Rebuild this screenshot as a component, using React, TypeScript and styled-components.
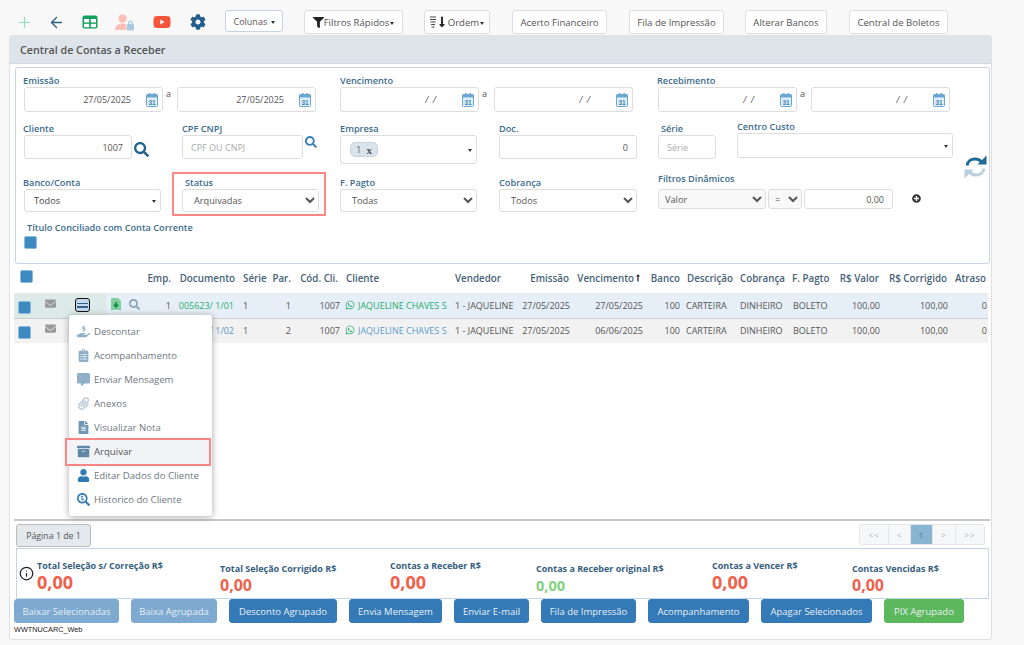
import React from 'react';
import styled, { createGlobalStyle } from 'styled-components';
import { Plus, ArrowLeft, Info } from 'lucide-react';
import {
  FaYoutube, FaCog, FaSearch, FaPlusCircle, FaWhatsapp, FaFilter, FaHandHoldingUsd,
  FaClipboardList, FaCommentAlt, FaPaperclip, FaFileAlt, FaArchive, FaUser, FaSearchDollar,
  FaEnvelope, FaLongArrowAltUp, FaLongArrowAltDown,
} from 'react-icons/fa';

const GlobalStyle = createGlobalStyle`
  * { box-sizing: border-box; }
  html, body { margin: 0; padding: 0; background: #f8f8f8; }
  body { font-family: "Open Sans", "Noto Sans", sans-serif; font-size: 9px; color: #555; }
`;

const Page = styled.div`
  width: 1024px;
  height: 645px;
  padding: 9px 32px 0 9px;
  overflow: hidden;
`;

const Toolbar = styled.div`
  display: flex;
  align-items: flex-start;
  height: 26px;
`;

const ToolIcon = styled.span<{ $w: number }>`
  width: ${(p) => p.$w}px;
  height: 26px;
  display: flex;
  align-items: center;
  justify-content: center;
  flex: none;
`;

const ToolButton = styled.button<{ $w: number; $mr: number; $ml?: number; $blue?: boolean }>`
  width: ${(p) => p.$w}px;
  height: ${(p) => (p.$blue ? 22 : 24)}px;
  margin: 1px ${(p) => p.$mr}px 0 ${(p) => p.$ml ?? 0}px;
  flex: none;
  display: flex;
  align-items: center;
  justify-content: center;
  padding: 0;
  background: #fff;
  border: 1px solid ${(p) => (p.$blue ? '#c6d3e3' : '#ddd')};
  border-radius: 3px;
  font: 400 ${(p) => (p.$blue ? 9 : 9.6)}px "Open Sans", sans-serif;
  color: #555;
  white-space: nowrap;
`;

const Caret = styled.span`
  display: inline-block;
  width: 0;
  height: 0;
  margin-left: 1px;
  margin-top: 2px;
  border-left: 2.5px solid transparent;
  border-right: 2.5px solid transparent;
  border-top: 3px solid #333;
`;

const Panel = styled.div`
  width: 983px;
  height: 605px;
  background: #fff;
  border: 1px solid #e0e0e0;
  border-radius: 3px;
  overflow: hidden;
`;

const PanelHead = styled.div`
  height: 28px;
  padding-left: 10px;
  display: flex;
  align-items: center;
  background: #dde4ea;
  border-bottom: 1px solid #cfd9e2;
  font-size: 10.7px;
  font-weight: 600;
  color: #555;
`;

const FilterBox = styled.div`
  margin: 3px 1px 0 5px;
  height: 197px;
  display: grid;
  grid-template-columns: 1fr 25px;
  padding: 6px 0 0 8px;
  border: 1px solid #c7d5e6;
  border-radius: 3px;
`;

const FormArea = styled.div`
  display: flex;
  flex-direction: column;
`;

const RefreshColumn = styled.div`
  padding-top: 81px;
`;

const FormRow = styled.div<{ $mt?: number }>`
  display: flex;
  align-items: flex-start;
  margin-top: ${(p) => p.$mt ?? 0}px;
`;

const Field = styled.div<{ $w: number; $mr?: number; $top?: number }>`
  width: ${(p) => p.$w}px;
  margin-right: ${(p) => p.$mr ?? 0}px;
  padding-top: ${(p) => p.$top ?? 0}px;
  flex: none;
`;

const HighlightField = styled(Field)`
  padding: 2px 5px 2px 8px;
  border: 2px solid #ff8585;
  border-radius: 1px;
`;

const Label = styled.div<{ $indent?: number }>`
  height: 13px;
  line-height: 13px;
  margin-left: ${(p) => p.$indent ?? 0}px;
  font-size: 9.2px;
  font-weight: 600;
  color: #3b6c8f;
  white-space: nowrap;
`;

const DatePair = styled.div`
  display: flex;
`;

const Joiner = styled.span<{ $w: number }>`
  width: ${(p) => p.$w}px;
  padding-left: 3px;
  font-size: 9px;
  line-height: 13px;
  color: #555;
`;

const DateBox = styled.div`
  width: 139px;
  height: 25px;
  display: flex;
  align-items: center;
  justify-content: flex-end;
  padding-right: 4px;
  border: 1px solid #ddd;
  border-radius: 3px;
  font-size: 9px;
  color: #555;
`;

const DateText = styled.span`
  margin-right: 15px;
`;

const EmptyDate = styled.span`
  margin-right: 26px;
  word-spacing: 2px;
  font-style: italic;
`;

const TextBox = styled.input<{ $w?: number; $h?: number }>`
  display: block;
  width: ${(p) => (p.$w ? `${p.$w}px` : '100%')};
  height: ${(p) => p.$h ?? 24}px;
  padding: 0 8px;
  border: 1px solid #ddd;
  border-radius: 3px;
  outline: none;
  background: #fff;
  font: 400 9px "Open Sans", sans-serif;
  color: #555;
  text-align: right;
  &::placeholder { color: #aaa; }
  &.left { text-align: left; }
`;

const InputLine = styled.div<{ $mt?: number }>`
  display: flex;
  align-items: flex-start;
  gap: 2px;
  margin-top: ${(p) => p.$mt ?? 0}px;
`;

const SearchSlot = styled.span<{ $mt: number }>`
  display: block;
  margin-top: ${(p) => p.$mt}px;
  line-height: 0;
`;

const AddSlot = styled.span`
  display: block;
  margin: 5px 0 0 17px;
  line-height: 0;
`;

const FakeSelect = styled.div<{ $h?: number }>`
  height: ${(p) => p.$h ?? 23}px;
  display: flex;
  align-items: center;
  justify-content: space-between;
  padding: 0 4px 0 9px;
  background: #fff;
  border: 1px solid #ddd;
  border-radius: 3px;
  font-size: 9.2px;
  color: #444;
`;

const NativeSelect = styled.select<{ $w?: number; $h?: number; $gray?: boolean }>`
  display: block;
  width: ${(p) => (p.$w ? `${p.$w}px` : '100%')};
  height: ${(p) => p.$h ?? 23}px;
  padding: 0 0 0 ${(p) => (p.$gray ? 2 : 7)}px;
  background-color: ${(p) => (p.$gray ? '#f8f8f8' : '#fff')};
  border: 1px solid #ddd;
  border-radius: 3px;
  outline: none;
  font: 400 9.2px "Open Sans", sans-serif;
  color: #555;
`;

const Tag = styled.span`
  display: inline-flex;
  align-items: center;
  gap: 5px;
  height: 15px;
  padding: 0 5px;
  background: #d9e3ec;
  border: 1px solid #c5d3df;
  border-radius: 5px;
  font-size: 9.5px;
  color: #666;
`;

const TagClose = styled.b`
  font-family: "Liberation Serif", serif;
  font-size: 11px;
  color: #555;
`;

const CheckSquare = styled.span<{ $mt?: number }>`
  display: block;
  width: 13px;
  height: 13px;
  margin-top: ${(p) => p.$mt ?? 0}px;
  background: #3d8ac0;
  border: 1px solid #8fbbdb;
  border-radius: 2px;
`;

const TableZone = styled.div`
  position: relative;
  height: 256px;
  margin: 1px 0 0 4px;
  width: 976px;
  border-bottom: 2px solid #c8c8c8;
`;

const Grid = styled.table`
  width: 974px;
  table-layout: fixed;
  border-collapse: collapse;
`;

const HeadCell = styled.th<{ $align?: string; $pl: number; $pr: number }>`
  height: 28px;
  padding: 0 ${(p) => p.$pr}px 0 ${(p) => p.$pl}px;
  text-align: ${(p) => p.$align ?? 'left'};
  vertical-align: middle;
  font-size: 9.8px;
  font-weight: 600;
  color: #466278;
  white-space: nowrap;
  border-bottom: 1px solid #e8e8e8;
`;

const BodyRow = styled.tr<{ $bg: string }>`
  background: ${(p) => p.$bg};
  border-bottom: 1px solid #cdcdcd;
  &:last-child { border-bottom: 0; }
`;

const BodyCell = styled.td<{ $align?: string; $pl: number; $pr: number; $tint?: boolean }>`
  height: 25px;
  padding: 0 ${(p) => p.$pr}px 0 ${(p) => p.$pl}px;
  text-align: ${(p) => p.$align ?? 'left'};
  font-size: 9px;
  color: #555;
  white-space: nowrap;
  overflow: hidden;
  background: ${(p) => (p.$tint ? '#dcebe8' : 'transparent')};
`;

const Tinted = styled.span<{ $color: string }>`
  color: ${(p) => p.$color};
`;

const RowCheck = styled(CheckSquare)`
  margin-top: 3px;
`;

const MailSlot = styled.span`
  display: block;
  line-height: 0;
  margin-top: -5px;
`;

const CellIcons = styled.span`
  display: flex;
  align-items: center;
  gap: 8px;
  margin-top: -3px;
`;

const MenuButton = styled.span`
  display: flex;
  flex-direction: column;
  justify-content: center;
  gap: 2px;
  width: 15px;
  height: 14px;
  margin: -1px 0 0 0;
  padding: 0 1px;
  background: #c3d8ea;
  border: 1.5px solid #111;
  border-radius: 3px;
`;

const MenuLine = styled.i`
  display: block;
  height: 1.5px;
  background: #2c5f8a;
`;

const RowMenu = styled.div`
  position: absolute;
  left: 55px;
  top: 50px;
  width: 143px;
  height: 201px;
  padding-top: 4px;
  background: #fff;
  border-radius: 3px;
  box-shadow: 0 1px 7px rgba(0, 0, 0, 0.35);
`;

const MenuItem = styled.div<{ $active?: boolean }>`
  display: flex;
  align-items: center;
  gap: 2px;
  height: 24.15px;
  padding-left: 6px;
  font-size: 9.6px;
  color: #6d7780;
  white-space: nowrap;
  ${(p) =>
    p.$active &&
    `margin: -2px 1px -2px -4px; height: 28px; padding-left: 8px; position: relative; background: #f2f3f6; border: 2px solid #ff8585; color: #555;`}
`;

const MenuGlyph = styled.span`
  width: 17px;
  display: flex;
  justify-content: center;
  color: #8fb0c8;
  font-size: 13px;
`;

const PagerRow = styled.div`
  display: flex;
  justify-content: space-between;
  margin: 3px 6px 0 6px;
  height: 24px;
`;

const PageLabel = styled.div`
  width: 75px;
  height: 23px;
  display: flex;
  align-items: center;
  justify-content: center;
  background: #e4e9ed;
  border: 1px solid #bbb;
  border-radius: 3px;
  font-size: 8.8px;
  color: #555;
`;

const Pager = styled.div`
  display: flex;
  height: 21px;
  border: 1px solid #e6e6e6;
  border-radius: 3px;
  overflow: hidden;
`;

const PagerCell = styled.span<{ $w: number; $active?: boolean }>`
  width: ${(p) => p.$w}px;
  display: flex;
  align-items: center;
  justify-content: center;
  background: ${(p) => (p.$active ? '#87b5d2' : '#f6f7f8')};
  border-right: 1px solid #e6e6e6;
  font-size: 8px;
  letter-spacing: 1px;
  color: ${(p) => (p.$active ? '#4c7796' : '#9fb0bf')};
  &:last-child { border-right: 0; }
`;

const SummaryBox = styled.div`
  display: flex;
  margin: 0 2px 0 6px;
  height: 51px;
  border: 1px solid #c3d5ea;
`;

const InfoSlot = styled.div`
  width: 20px;
  padding: 17px 0 0 2px;
  color: #222;
`;

const Stat = styled.div<{ $w: number; $top: number }>`
  width: ${(p) => p.$w}px;
  padding-top: ${(p) => p.$top}px;
  flex: none;
`;

const StatLabel = styled.div`
  height: 13px;
  line-height: 13px;
  font-size: 9px;
  font-weight: 700;
  color: #36607f;
  white-space: nowrap;
`;

const StatValue = styled.div<{ $size: number; $color: string }>`
  line-height: 21px;
  font-size: ${(p) => p.$size}px;
  font-weight: 700;
  color: ${(p) => p.$color};
`;

const ActionBar = styled.div`
  display: flex;
  gap: 12px;
  margin: 0 0 0 4px;
`;

const ActionButton = styled.button<{ $w: number; $tone: string }>`
  width: ${(p) => p.$w}px;
  height: 24px;
  padding: 0;
  background: ${(p) => p.$tone};
  border: 1px solid ${(p) => p.$tone};
  border-radius: 3px;
  font: 400 9.5px "Open Sans", sans-serif;
  color: #e8eef5;
  white-space: nowrap;
`;

const ProgramName = styled.div`
  margin: 1px 0 0 4px;
  height: 12px;
  font: 400 7.3px/12px "Liberation Sans", sans-serif;
  color: #222;
`;

const SortGlyph = styled.span`
  display: inline-flex;
  align-items: center;
`;

const CalendarIcon = () => (
  <svg width="12" height="14" viewBox="0 0 12 14">
    <rect x="0.5" y="1.5" width="11" height="12" rx="1" fill="#e2eff8" stroke="#6aa8d4" />
    <rect x="0.5" y="1.5" width="11" height="3" fill="#6aa8d4" />
    <rect x="3" y="0" width="1.5" height="3" fill="#6aa8d4" />
    <rect x="7.5" y="0" width="1.5" height="3" fill="#6aa8d4" />
    <text x="6" y="12" textAnchor="middle" fontSize="6.5" fontFamily="Liberation Sans" fontWeight="700" fill="#3b82b5">31</text>
  </svg>
);

const SheetIcon = () => (
  <svg width="16" height="14" viewBox="0 0 16 14">
    <rect x="0.5" y="0.5" width="15" height="13" rx="2" fill="#12a05c" />
    <rect x="2" y="4" width="5.2" height="3.4" fill="#fff" />
    <rect x="8.8" y="4" width="5.2" height="3.4" fill="#fff" />
    <rect x="2" y="8.8" width="5.2" height="3.4" fill="#fff" />
    <rect x="8.8" y="8.8" width="5.2" height="3.4" fill="#fff" />
  </svg>
);

const UserLockIcon = () => (
  <svg width="20" height="17" viewBox="0 0 20 17">
    <circle cx="7.5" cy="4.5" r="4" fill="#fcc0b8" />
    <path d="M0 16c0-4 3-6.5 7-6.5 2 0 3.5.5 4.5 1.5v5z" fill="#fcc0b8" />
    <rect x="12" y="10" width="7" height="6.5" rx="1" fill="#a9c8e2" />
    <path d="M13.7 10V8.5a1.9 1.9 0 013.6 0V10" fill="none" stroke="#a9c8e2" strokeWidth="1.2" />
  </svg>
);

const SortIcon = () => (
  <SortGlyph>
    <svg width="6" height="12" viewBox="0 0 6 12">
      <path d="M0 1h6M0 3.5h6M.5 6h5M1 8.500h4M1.500 11h3" stroke="#444" strokeWidth="1.100" />
    </svg>
    <FaLongArrowAltDown size={12} color="#222" />
  </SortGlyph>
);

const RefreshIcon = () => (
  <svg width="23" height="23" viewBox="0 0 23 23">
    <path d="M3 10.500C3.600 6.500 7 4 11 4c2.800 0 5 1 6.500 3" fill="none" stroke="#1f6a96" strokeWidth="3" />
    <path d="M22.500 0.500v9h-9z" fill="#1f6a96" />
    <path d="M20 13.500c-.600 4-4 6.500-8 6.500-2.800 0-5-1-6.500-3" fill="none" stroke="#b9d0df" strokeWidth="3" />
    <path d="M0.500 23.500v-9h9z" fill="#b9d0df" />
  </svg>
);

const DocIcon = () => (
  <svg width="10" height="12" viewBox="0 0 10 12">
    <path d="M1 0h6l3 3v9H0V1a1 1 0 011-1z" fill="#7fcf9d" />
    <path d="M5 4v4M3 6.500 5 9l2-2.500" stroke="#0d8a45" strokeWidth="1.500" fill="none" />
  </svg>
);

const columns: { title: React.ReactNode; w: number; align?: string; pl?: number; pr?: number; bodyPr?: number; bodyPl?: number }[] = [
  { title: <CheckSquare $mt={-5} />, w: 24, pl: 6, bodyPl: 4 },
  { title: '', w: 30, pl: 7 },
  { title: '', w: 38, pl: 7 },
  { title: '', w: 40, pl: 5 },
  { title: 'Emp.', w: 29, align: 'right', pr: 4 },
  { title: 'Documento', w: 66, align: 'right', pr: 6, bodyPr: 7 },
  { title: 'Série', w: 31, pl: 2 },
  { title: 'Par.', w: 21, align: 'right', pr: 2 },
  { title: 'Cód. Cli.', w: 49, align: 'right', pr: 4, bodyPr: 2 },
  { title: 'Cliente', w: 111, pl: 4, bodyPl: 3 },
  { title: 'Vendedor', w: 66, pl: 2 },
  { title: 'Emissão', w: 52, align: 'right', pr: 2, bodyPr: 1 },
  {
    title: (
      <>
        Vencimento
        <FaLongArrowAltUp size={8} color="#222" />
      </>
    ),
    w: 72,
    align: 'right',
    pr: 1,
    bodyPr: 0,
  },
  { title: 'Banco', w: 37, align: 'right', pr: 0 },
  { title: 'Descrição', w: 56, pl: 7, bodyPl: 6 },
  { title: 'Cobrança', w: 50, pl: 4 },
  { title: 'F. Pagto', w: 49, pl: 6, bodyPl: 7 },
  { title: 'R$ Valor', w: 46, align: 'right', pr: 2, bodyPr: 1 },
  { title: 'R$ Corrigido', w: 68, align: 'right', pr: 2, bodyPr: 1 },
  { title: 'Atraso', w: 39, align: 'right', pr: 2, bodyPr: 1 },
];

const rows = [
  { doc: '005623/ 1/01', par: '1', venc: '27/05/2025', bg: '#e6eef7', link: '#27ae6f', client: '#27ae6f', tint: true },
  { doc: '005623/ 1/02', par: '2', venc: '06/06/2025', bg: '#f2f2f2', link: '#5c93c4', client: '#5c9bd0', tint: false },
];

const menuItems = [
  { label: 'Descontar', icon: <FaHandHoldingUsd /> },
  { label: 'Acompanhamento', icon: <FaClipboardList /> },
  { label: 'Enviar Mensagem', icon: <FaCommentAlt /> },
  { label: 'Anexos', icon: <FaPaperclip color="#c3d0da" /> },
  { label: 'Visualizar Nota', icon: <FaFileAlt color="#6f96b4" /> },
  { label: 'Arquivar', icon: <FaArchive color="#5f87a8" />, active: true },
  { label: 'Editar Dados do Cliente', icon: <FaUser color="#2f7ab5" /> },
  { label: 'Historico do Cliente', icon: <FaSearchDollar color="#2f7ab5" /> },
];

const stats = [
  { label: 'Total Seleção s/ Correção R$', w: 183, top: 10, size: 18, color: '#f0604a' },
  { label: 'Total Seleção Corrigido R$', w: 170, top: 13, size: 16, color: '#f0604a' },
  { label: 'Contas a Receber R$', w: 146, top: 10, size: 18, color: '#f0604a' },
  { label: 'Contas a Receber original R$', w: 176, top: 13, size: 14.5, color: '#82d17f' },
  { label: 'Contas a Vencer R$', w: 140, top: 10, size: 18, color: '#f0604a' },
  { label: 'Contas Vencidas R$', w: 130, top: 13, size: 16, color: '#f0604a' },
];

const actions = [
  { label: 'Baixar Selecionadas', w: 105, tone: '#7ea9d0' },
  { label: 'Baixa Agrupada', w: 86, tone: '#7ea9d0' },
  { label: 'Desconto Agrupado', w: 108, tone: '#337ab7' },
  { label: 'Envia Mensagem', w: 93, tone: '#337ab7' },
  { label: 'Enviar E-mail', w: 75, tone: '#337ab7' },
  { label: 'Fila de Impressão', w: 95, tone: '#337ab7' },
  { label: 'Acompanhamento', w: 101, tone: '#337ab7' },
  { label: 'Apagar Selecionados', w: 111, tone: '#337ab7' },
  { label: 'PIX Agrupado', w: 80, tone: '#5cb85c' },
];

function DateRange({ from, to, gap = 14 }: { from?: string; to?: string; gap?: number }) {
  const slot = (value?: string) =>
    value ? <DateText>{value}</DateText> : <EmptyDate>/ /</EmptyDate>;
  return (
    <DatePair>
      <DateBox>{slot(from)}<CalendarIcon /></DateBox>
      <Joiner $w={gap}>a</Joiner>
      <DateBox>{slot(to)}<CalendarIcon /></DateBox>
    </DatePair>
  );
}

export default function App() {
  return (
    <Page>
      <GlobalStyle />
      <Toolbar>
        <ToolIcon $w={30}><Plus size={17} color="#8fdcb8" strokeWidth={1.6} /></ToolIcon>
        <ToolIcon $w={34}><ArrowLeft size={17} color="#2a5f85" strokeWidth={1.8} /></ToolIcon>
        <ToolIcon $w={34}><SheetIcon /></ToolIcon>
        <ToolIcon $w={36}><UserLockIcon /></ToolIcon>
        <ToolIcon $w={38}><FaYoutube size={18} color="#f4553b" /></ToolIcon>
        <ToolIcon $w={34}><FaCog size={16} color="#225f8c" /></ToolIcon>
        <ToolButton $w={58} $mr={21} $ml={10} $blue>Colunas&nbsp;<Caret /></ToolButton>
        <ToolButton $w={99} $mr={21}><FaFilter size={11} color="#222" />Filtros Rápidos<Caret /></ToolButton>
        <ToolButton $w={66} $mr={22}><SortIcon />Ordem<Caret /></ToolButton>
        <ToolButton $w={95} $mr={22}>Acerto Financeiro</ToolButton>
        <ToolButton $w={95} $mr={21}>Fila de Impressão</ToolButton>
        <ToolButton $w={82} $mr={22}>Alterar Bancos</ToolButton>
        <ToolButton $w={99} $mr={0}>Central de Boletos</ToolButton>
      </Toolbar>

      <Panel>
        <PanelHead>Central de Contas a Receber</PanelHead>
        <FilterBox>
          <FormArea>
            <FormRow>
              <Field $w={292} $mr={24}>
                <Label $indent={-1}>Emissão</Label>
                <DateRange from="27/05/2025" to="27/05/2025" />
              </Field>
              <Field $w={293} $mr={25}>
                <Label>Vencimento</Label>
                <DateRange gap={15} />
              </Field>
              <Field $w={292}>
                <Label $indent={-1}>Recebimento</Label>
                <DateRange />
              </Field>
            </FormRow>

            <FormRow $mt={8}>
              <Field $w={125} $mr={33} $top={2}>
                <Label $indent={-1}>Cliente</Label>
                <InputLine>
                  <TextBox $w={108} readOnly value="1007" />
                  <SearchSlot $mt={7}><FaSearch size={15} color="#24638f" /></SearchSlot>
                </InputLine>
              </Field>
              <Field $w={136} $mr={22} $top={2}>
                <Label>CPF CNPJ</Label>
                <InputLine>
                  <TextBox $w={121} className="left" readOnly placeholder="CPF OU CNPJ" />
                  <SearchSlot $mt={1}><FaSearch size={12} color="#3b82b5" /></SearchSlot>
                </InputLine>
              </Field>
              <Field $w={137} $mr={22} $top={2}>
                <Label>Empresa</Label>
                <FakeSelect $h={29}>
                  <Tag>1 <TagClose>x</TagClose></Tag>
                  <Caret />
                </FakeSelect>
              </Field>
              <Field $w={138} $mr={21} $top={2}>
                <Label>Doc.</Label>
                <TextBox readOnly value="0" />
              </Field>
              <Field $w={58} $mr={21} $top={2}>
                <Label $indent={3}>Série</Label>
                <TextBox className="left" readOnly placeholder="Série" />
              </Field>
              <Field $w={216}>
                <Label>Centro Custo</Label>
                <FakeSelect $h={25}><span /><Caret /></FakeSelect>
              </Field>
            </FormRow>

            <FormRow $mt={8}>
              <Field $w={137} $mr={11} $top={4}>
                <Label $indent={-1}>Banco/Conta</Label>
                <FakeSelect>Todos<Caret /></FakeSelect>
              </Field>
              <HighlightField $w={154} $mr={14}>
                <Label $indent={3}>Status</Label>
                <NativeSelect defaultValue="Arquivadas">
                  <option>Arquivadas</option>
                </NativeSelect>
              </HighlightField>
              <Field $w={137} $mr={22} $top={4}>
                <Label>F. Pagto</Label>
                <NativeSelect defaultValue="Todas"><option>Todas</option></NativeSelect>
              </Field>
              <Field $w={138} $mr={21} $top={4}>
                <Label>Cobrança</Label>
                <NativeSelect defaultValue="Todos"><option>Todos</option></NativeSelect>
              </Field>
              <Field $w={290}>
                <Label>Filtros Dinâmicos</Label>
                <InputLine $mt={4}>
                  <NativeSelect $w={108} $h={20} $gray defaultValue="Valor"><option>Valor</option></NativeSelect>
                  <NativeSelect $w={34} $h={20} $gray defaultValue="="><option>=</option></NativeSelect>
                  <TextBox $w={89} $h={20} readOnly value="0,00" />
                  <AddSlot><FaPlusCircle size={9} color="#333" /></AddSlot>
                </InputLine>
              </Field>
            </FormRow>

            <FormRow $mt={5}>
              <Field $w={300}>
                <Label $indent={3}>Título Conciliado com Conta Corrente</Label>
                <CheckSquare $mt={2} />
              </Field>
            </FormRow>
          </FormArea>
          <RefreshColumn><RefreshIcon /></RefreshColumn>
        </FilterBox>

        <TableZone>
          <Grid>
            <colgroup>
              {columns.map((c, i) => <col key={i} style={{ width: c.w }} />)}
            </colgroup>
            <thead>
              <tr>
                {columns.map((c, i) => (
                  <HeadCell key={i} $align={c.align} $pl={c.pl ?? 0} $pr={c.pr ?? 0}>{c.title}</HeadCell>
                ))}
              </tr>
            </thead>
            <tbody>
              {rows.map((r) => {
                const cells: React.ReactNode[] = [
                  <RowCheck />,
                  <MailSlot><FaEnvelope size={11} color="#999" /></MailSlot>,
                  r.tint ? <MenuButton><MenuLine /><MenuLine /></MenuButton> : null,
                  r.tint ? <CellIcons><DocIcon /><FaSearch size={11} color="#8aa3b6" /></CellIcons> : null,
                  '1',
                  <Tinted $color={r.link}>{r.doc}</Tinted>,
                  '1',
                  r.par,
                  '1007',
                  <Tinted $color={r.client}>
                    <FaWhatsapp size={10} color="#27ae6f" style={{ marginRight: 3, verticalAlign: -1 }} />
                    JAQUELINE CHAVES S
                  </Tinted>,
                  '1 - JAQUELINE',
                  '27/05/2025',
                  r.venc,
                  '100',
                  'CARTEIRA',
                  'DINHEIRO',
                  'BOLETO',
                  '100,00',
                  '100,00',
                  '0',
                ];
                return (
                  <BodyRow key={r.doc} $bg={r.bg}>
                    {cells.map((content, i) => {
                      const c = columns[i];
                      return (
                        <BodyCell
                          key={i}
                          $align={c.align}
                          $pl={c.bodyPl ?? c.pl ?? 0}
                          $pr={c.bodyPr ?? c.pr ?? 0}
                          $tint={r.tint && i < 3}
                        >
                          {content}
                        </BodyCell>
                      );
                    })}
                  </BodyRow>
                );
              })}
            </tbody>
          </Grid>

          <RowMenu>
            {menuItems.map((m) => (
              <MenuItem key={m.label} $active={m.active}>
                <MenuGlyph>{m.icon}</MenuGlyph>
                {m.label}
              </MenuItem>
            ))}
          </RowMenu>
        </TableZone>

        <PagerRow>
          <PageLabel>Página 1 de 1</PageLabel>
          <Pager>
            <PagerCell $w={29}>&lt;&lt;</PagerCell>
            <PagerCell $w={22}>&lt;</PagerCell>
            <PagerCell $w={22} $active>1</PagerCell>
            <PagerCell $w={23}>&gt;</PagerCell>
            <PagerCell $w={28}>&gt;&gt;</PagerCell>
          </Pager>
        </PagerRow>

        <SummaryBox>
          <InfoSlot><Info size={15} strokeWidth={2} /></InfoSlot>
          {stats.map((s) => (
            <Stat key={s.label} $w={s.w} $top={s.top}>
              <StatLabel>{s.label}</StatLabel>
              <StatValue $size={s.size} $color={s.color}>0,00</StatValue>
            </Stat>
          ))}
        </SummaryBox>

        <ActionBar>
          {actions.map((a) => (
            <ActionButton key={a.label} $w={a.w} $tone={a.tone}>{a.label}</ActionButton>
          ))}
        </ActionBar>
        <ProgramName>WWTNUCARC_Web</ProgramName>
      </Panel>
    </Page>
  );
}
